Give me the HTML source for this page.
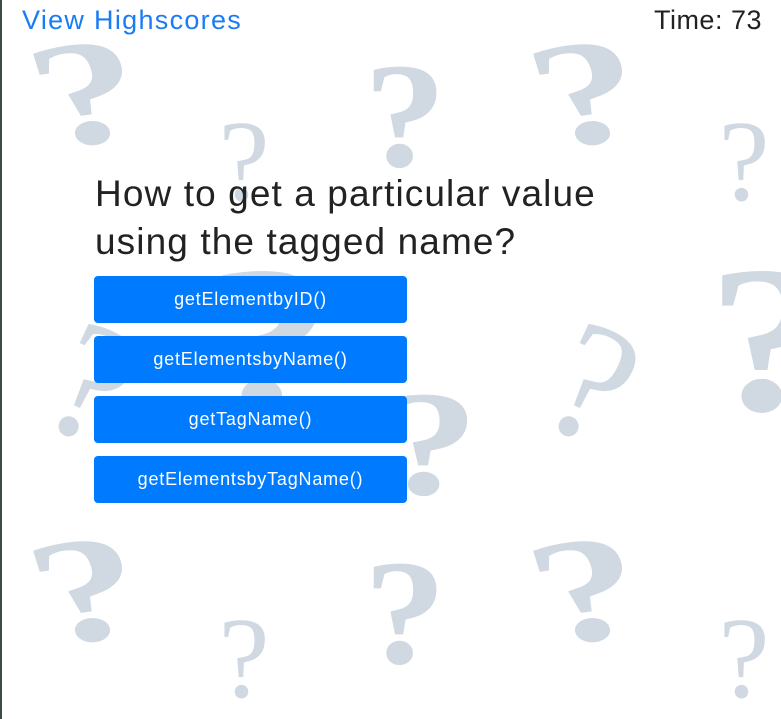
<!DOCTYPE html>
<html><head><meta charset="utf-8"><style>
html,body{margin:0;padding:0;width:781px;height:719px;overflow:hidden;background:#fff;font-family:"Liberation Sans",sans-serif;}
#bg{position:absolute;left:0;top:0;}
.edge{position:absolute;left:0;top:0;width:2px;height:719px;background:#3b4a44;}
.hs{position:absolute;left:22px;top:5px;font-size:27px;color:#1a7cf5;letter-spacing:1.3px;}
.time{position:absolute;right:19px;top:5px;font-size:27px;color:#222;letter-spacing:0.5px;}
h1{position:absolute;left:95px;top:170px;margin:0;font-weight:normal;font-size:37px;line-height:48px;color:#222;width:600px;letter-spacing:1.1px;}
.btn{position:absolute;left:94px;width:313px;height:47px;background:#007bff;border-radius:4px;color:#fff;font-size:18px;text-align:center;line-height:47px;letter-spacing:0.8px;}
</style></head><body>
<svg id="bg" width="781" height="719">
<defs><pattern id="p" x="0" y="0" width="500" height="497" patternUnits="userSpaceOnUse">
<g fill="#d0d9e2" font-family="Liberation Serif,serif">
<g transform="translate(88 0) scale(1.45 1) translate(-88 0)"><text x="88" y="143" font-size="150" font-weight="bold" text-anchor="middle" transform="rotate(-12 88 95)">?</text></g>
<text x="244" y="200" font-size="115" text-anchor="middle">?</text>
<g transform="translate(405 0) scale(1.1 1) translate(-405 0)"><text x="405" y="166" font-size="150" font-weight="bold" text-anchor="middle">?</text></g>
<text x="92" y="440" font-size="170" text-anchor="middle" transform="rotate(25 92 385)">?</text>
<g transform="translate(270 0) scale(1.2 1) translate(-270 0)"><text x="270" y="410" font-size="210" font-weight="bold" text-anchor="middle">?</text></g>
<g transform="translate(430 0) scale(1.3 1) translate(-430 0)"><text x="430" y="494" font-size="150" font-weight="bold" text-anchor="middle">?</text></g>
</g></pattern></defs>
<rect width="781" height="719" fill="url(#p)"/>
</svg>
<div class="edge"></div>
<div class="hs">View Highscores</div>
<div class="time">Time: 73</div>
<h1>How to get a particular value<br>using the tagged name?</h1>
<div class="btn" style="top:276px">getElementbyID()</div>
<div class="btn" style="top:336px">getElementsbyName()</div>
<div class="btn" style="top:396px">getTagName()</div>
<div class="btn" style="top:456px">getElementsbyTagName()</div>
</body></html>
